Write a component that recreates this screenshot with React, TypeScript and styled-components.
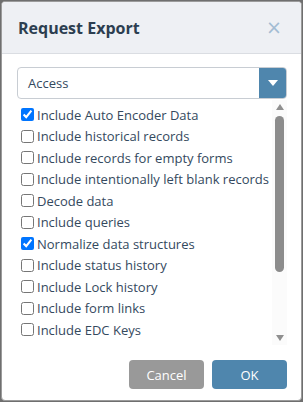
import React from 'react';
import styled, { createGlobalStyle } from 'styled-components';

const GlobalStyle = createGlobalStyle`
  html, body {
    margin: 0;
    padding: 0;
    background: #6f6f6f;
    font-family: 'Open Sans', Arial, sans-serif;
  }
  * { box-sizing: border-box; }
`;

const Dialog = styled.div`
  width: 301px;
  height: 400px;
  margin: 1px;
  background: #ffffff;
  border: 1px solid #9b9b9b;
  border-radius: 4px;
  overflow: hidden;
  display: flex;
  flex-direction: column;
`;

const Header = styled.div`
  height: 52px;
  flex-shrink: 0;
  display: flex;
  align-items: center;
  justify-content: space-between;
  padding: 0 19px 0 16px;
  background: #eef0f4;
  border-bottom: 1px solid #dadde2;
`;

const Title = styled.h2`
  margin: 0;
  font-size: 16px;
  font-weight: 700;
  color: #2c3e50;
`;

const Close = styled.button`
  border: none;
  background: none;
  padding: 0;
  font-size: 19px;
  line-height: 1;
  color: #a3bcd3;
  font-family: 'DejaVu Sans', Arial, sans-serif;
  cursor: pointer;
`;

const Body = styled.div`
  flex: 1;
  min-height: 0;
  display: flex;
  flex-direction: column;
  padding: 13px 14px 0 15px;
`;

const Select = styled.div`
  height: 32px;
  flex-shrink: 0;
  display: flex;
  border: 1px solid #c8cdd3;
  border-radius: 4px;
  overflow: hidden;
`;

const SelectValue = styled.div`
  flex: 1;
  display: flex;
  align-items: center;
  padding-left: 10px;
  font-size: 13px;
  color: #34495e;
`;

const SelectButton = styled.div`
  width: 27px;
  background: #4f86ad;
  display: flex;
  align-items: center;
  justify-content: center;
`;

const Caret = styled.span`
  width: 0;
  height: 0;
  border-left: 5px solid transparent;
  border-right: 5px solid transparent;
  border-top: 6px solid #ffffff;
`;

const ListBox = styled.div`
  height: 245px;
  margin-top: 1px;
  display: flex;
`;

const Items = styled.div`
  flex: 1;
  min-width: 0;
  overflow: hidden;
  padding-top: 4px;
`;

const ScrollTrack = styled.div`
  width: 15px;
  flex-shrink: 0;
  background: #fbfbfb;
  display: flex;
  flex-direction: column;
  align-items: center;
`;

const Arrow = styled.div<{ $down?: boolean }>`
  height: 14px;
  width: 15px;
  flex-shrink: 0;
  display: flex;
  align-items: center;
  justify-content: center;

  &::before {
    content: '';
    width: 0;
    height: 0;
    border-left: 4px solid transparent;
    border-right: 4px solid transparent;
    ${p =>
      p.$down
        ? 'border-top: 6px solid #8f8f8f;'
        : 'border-bottom: 6px solid #8f8f8f;'}
  }
`;

const Thumb = styled.div`
  width: 9px;
  height: 156px;
  margin-top: 2px;
  background: #8c8c8c;
  border-radius: 5px;
`;

const Spacer = styled.div`
  flex: 1;
`;

const Row = styled.label`
  display: flex;
  align-items: center;
  height: 21.5px;
  font-size: 13px;
  color: #34495e;
  white-space: nowrap;
`;

const Box = styled.input`
  margin: 0 3px 0 4px;
  width: 13px;
  height: 13px;
  flex-shrink: 0;
`;

const Footer = styled.div`
  height: 56px;
  flex-shrink: 0;
  display: flex;
  justify-content: flex-end;
  align-items: flex-start;
  gap: 8px;
  padding: 16px 14px 0 0;
`;

const Button = styled.button<{ $primary?: boolean }>`
  width: 75px;
  height: 29px;
  border: none;
  border-radius: 4px;
  background: ${p => (p.$primary ? '#4f86ad' : '#999999')};
  color: #ffffff;
  font-family: 'Open Sans', Arial, sans-serif;
  font-size: 13px;
  cursor: pointer;
`;

const options: [string, boolean][] = [
  ['Include Auto Encoder Data', true],
  ['Include historical records', false],
  ['Include records for empty forms', false],
  ['Include intentionally left blank records', false],
  ['Decode data', false],
  ['Include queries', false],
  ['Normalize data structures', true],
  ['Include status history', false],
  ['Include Lock history', false],
  ['Include form links', false],
  ['Include EDC Keys', false],
  ['Include metadata', false],
];

const App = () => {
  return (
    <>
      <GlobalStyle />
      <Dialog>
        <Header>
          <Title>Request Export</Title>
          <Close>×</Close>
        </Header>
        <Body>
          <Select>
            <SelectValue>Access</SelectValue>
            <SelectButton>
              <Caret />
            </SelectButton>
          </Select>
          <ListBox>
            <Items>
              {options.map(([text, checked]) => (
                <Row key={text}>
                  <Box type="checkbox" defaultChecked={checked} />
                  {text}
                </Row>
              ))}
            </Items>
            <ScrollTrack>
              <Arrow />
              <Thumb />
              <Spacer />
              <Arrow $down />
            </ScrollTrack>
          </ListBox>
        </Body>
        <Footer>
          <Button>Cancel</Button>
          <Button $primary>OK</Button>
        </Footer>
      </Dialog>
    </>
  );
};

export default App;
